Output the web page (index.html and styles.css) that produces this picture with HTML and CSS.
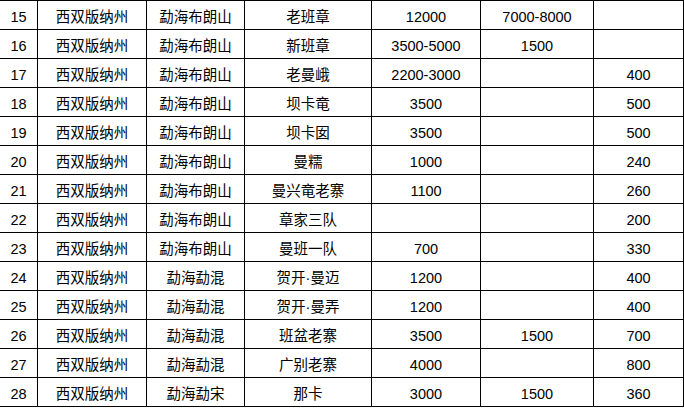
FILE: index.html
```html
<!DOCTYPE html>
<html lang="zh">
<head>
<meta charset="utf-8">
<title>茶山价格表</title>
<link rel="stylesheet" href="styles.css">
</head>
<body>
<div class="sheet">
  <div class="row"><div class="c">15</div><div class="c">西双版纳州</div><div class="c">勐海布朗山</div><div class="c">老班章</div><div class="c">12000</div><div class="c">7000-8000</div><div class="c"></div></div>
  <div class="row"><div class="c">16</div><div class="c">西双版纳州</div><div class="c">勐海布朗山</div><div class="c">新班章</div><div class="c">3500-5000</div><div class="c">1500</div><div class="c"></div></div>
  <div class="row"><div class="c">17</div><div class="c">西双版纳州</div><div class="c">勐海布朗山</div><div class="c">老曼峨</div><div class="c">2200-3000</div><div class="c"></div><div class="c">400</div></div>
  <div class="row"><div class="c">18</div><div class="c">西双版纳州</div><div class="c">勐海布朗山</div><div class="c">坝卡竜</div><div class="c">3500</div><div class="c"></div><div class="c">500</div></div>
  <div class="row"><div class="c">19</div><div class="c">西双版纳州</div><div class="c">勐海布朗山</div><div class="c">坝卡囡</div><div class="c">3500</div><div class="c"></div><div class="c">500</div></div>
  <div class="row"><div class="c">20</div><div class="c">西双版纳州</div><div class="c">勐海布朗山</div><div class="c">曼糯</div><div class="c">1000</div><div class="c"></div><div class="c">240</div></div>
  <div class="row"><div class="c">21</div><div class="c">西双版纳州</div><div class="c">勐海布朗山</div><div class="c">曼兴竜老寨</div><div class="c">1100</div><div class="c"></div><div class="c">260</div></div>
  <div class="row"><div class="c">22</div><div class="c">西双版纳州</div><div class="c">勐海布朗山</div><div class="c">章家三队</div><div class="c"></div><div class="c"></div><div class="c">200</div></div>
  <div class="row"><div class="c">23</div><div class="c">西双版纳州</div><div class="c">勐海布朗山</div><div class="c">曼班一队</div><div class="c">700</div><div class="c"></div><div class="c">330</div></div>
  <div class="row"><div class="c">24</div><div class="c">西双版纳州</div><div class="c">勐海勐混</div><div class="c">贺开·曼迈</div><div class="c">1200</div><div class="c"></div><div class="c">400</div></div>
  <div class="row"><div class="c">25</div><div class="c">西双版纳州</div><div class="c">勐海勐混</div><div class="c">贺开·曼弄</div><div class="c">1200</div><div class="c"></div><div class="c">400</div></div>
  <div class="row"><div class="c">26</div><div class="c">西双版纳州</div><div class="c">勐海勐混</div><div class="c">班盆老寨</div><div class="c">3500</div><div class="c">1500</div><div class="c">700</div></div>
  <div class="row"><div class="c">27</div><div class="c">西双版纳州</div><div class="c">勐海勐混</div><div class="c">广别老寨</div><div class="c">4000</div><div class="c"></div><div class="c">800</div></div>
  <div class="row"><div class="c">28</div><div class="c">西双版纳州</div><div class="c">勐海勐宋</div><div class="c">那卡</div><div class="c">3000</div><div class="c">1500</div><div class="c">360</div></div>
</div>
</body>
</html>
```
FILE: styles.css
```css
html, body {
  margin: 0;
  padding: 0;
  background: #ffffff;
}
.sheet {
  width: 684px;
  border-top: 1px solid #000;
  font-family: "Liberation Sans", "Noto Sans CJK SC", sans-serif;
  font-size: 14.5px;
  color: #000;
}
.row {
  display: grid;
  grid-template-columns: 38px 109px 98px 127px 109px 113px 90px;
  height: 29px;
}
.c {
  box-sizing: border-box;
  border-right: 1px solid #000;
  border-bottom: 1px solid #000;
  text-align: center;
  line-height: 16px;
  padding-top: 8px;
  white-space: nowrap;
  overflow: hidden;
}
```
